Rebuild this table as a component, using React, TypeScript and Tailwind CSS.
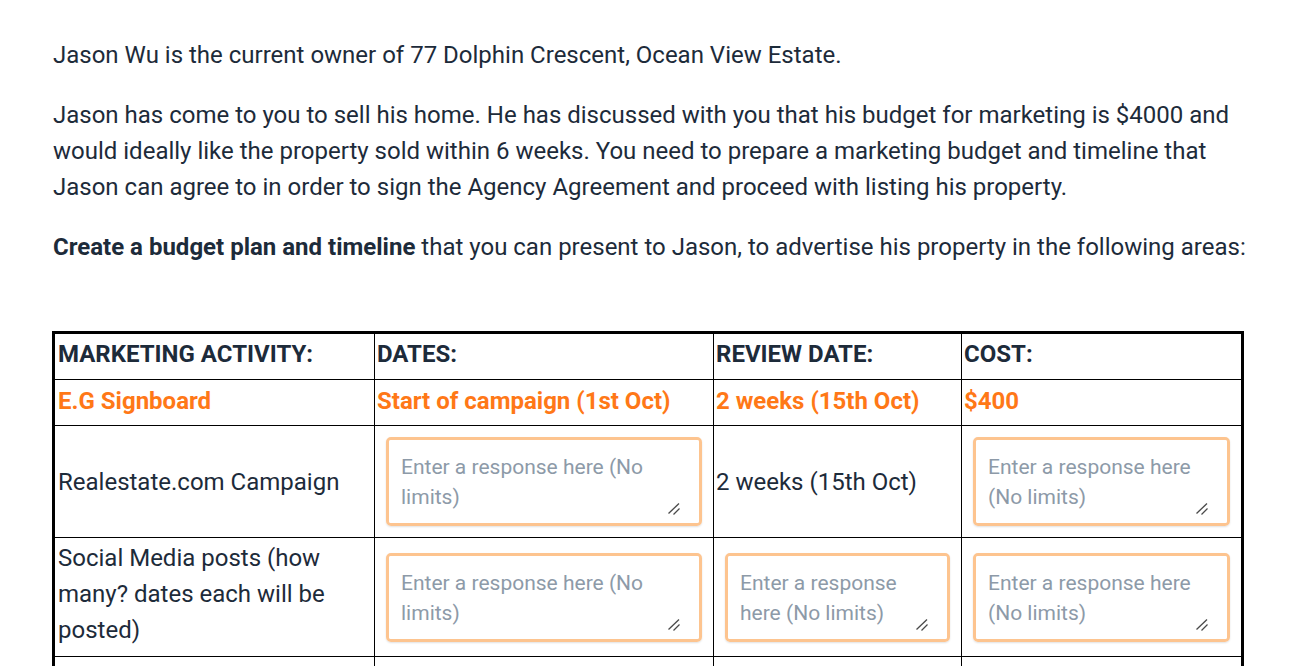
const rows = [
  {
    activity: "Realestate.com Campaign",
    pad: "pt-[5px] pb-[5px]",
    dates: null,
    review: "2 weeks (15th Oct)",
    cost: null,
  },
  {
    activity: "Social Media posts (how many? dates each will be posted)",
    pad: "pt-[2px] pb-[8px]",
    dates: null,
    review: null,
    cost: null,
  },
  {
    activity: "",
    pad: "pt-[5px] pb-[5px]",
    dates: null,
    review: null,
    cost: null,
  },
];

function ResponseBox() {
  return (
    <div className="relative">
      <textarea
        placeholder="Enter a response here (No limits)"
        className="block w-full h-[89px] resize-none rounded-[5px] border-[3px] border-[#fdc48f] bg-white p-3 text-[21px] leading-[30px] text-[#1f2d3d] placeholder:text-[#8d9aa8] shadow-[0_1px_2px_rgba(0,0,0,0.12)] outline-none"
      />
      {/* resize grip */}
      <svg className="absolute right-[22px] bottom-[11px] w-3 h-3" viewBox="0 0 12 12">
        <line x1="0.5" y1="10.5" x2="11" y2="0.5" stroke="#4a4a4a" strokeWidth="1.3" />
        <line x1="5.5" y1="11.5" x2="11.5" y2="5.5" stroke="#4a4a4a" strokeWidth="1.3" />
      </svg>
    </div>
  );
}

function Cell({ value }: { value: string | null }) {
  if (value === null) {
    return (
      <td className="border border-black py-[11px] px-[11px] align-middle">
        <ResponseBox />
      </td>
    );
  }
  return (
    <td className="border border-black pl-[2px] pr-1 pt-[5px] pb-[4px] align-middle">{value}</td>
  );
}

export default function App() {
  return (
    <div className="min-h-screen bg-white font-['Roboto',sans-serif] text-[24px] leading-[36px] text-[#1d2b3a]">
      <div className="pl-[53px] pr-[40px] pt-[37px]">
        <p className="mb-6">Jason Wu is the current owner of 77 Dolphin Crescent, Ocean View Estate.</p>
        <p className="mb-6">
          Jason has come to you to sell his home. He has discussed with you that his budget for marketing is $4000 and
          would ideally like the property sold within 6 weeks. You need to prepare a marketing budget and timeline that
          Jason can agree to in order to sign the Agency Agreement and proceed with listing his property.
        </p>
        <p className="mb-[66px]">
          <strong className="font-bold">Create a budget plan and timeline</strong> that you can present to Jason, to
          advertise his property in the following areas:
        </p>

        <table className="-ml-px w-[1189px] table-fixed border-collapse border-[3px] border-black">
          <colgroup>
            <col className="w-[321px]" />
            <col className="w-[339px]" />
            <col className="w-[248px]" />
            <col className="w-[281px]" />
          </colgroup>
          <thead>
            <tr className="text-left">
              <th className="border border-black pl-[3px] pt-[2px] pb-[7px] font-bold">MARKETING ACTIVITY:</th>
              <th className="border border-black pl-[2px] pt-[2px] pb-[7px] font-bold">DATES:</th>
              <th className="border border-black pl-[2px] pt-[2px] pb-[7px] font-bold">REVIEW DATE:</th>
              <th className="border border-black pl-[2px] pt-[2px] pb-[7px] font-bold">COST:</th>
            </tr>
          </thead>
          <tbody>
            <tr className="font-bold text-[#ff7817]">
              <td className="border border-black pl-[3px] pt-[3px] pb-[6px]">E.G Signboard</td>
              <td className="border border-black pl-[2px] pt-[3px] pb-[6px]">Start of campaign (1st Oct)</td>
              <td className="border border-black pl-[2px] pt-[3px] pb-[6px]">2 weeks (15th Oct)</td>
              <td className="border border-black pl-[2px] pt-[3px] pb-[6px]">$400</td>
            </tr>
            {rows.map((row, i) => (
              <tr key={i}>
                <td className={`border border-black pl-[3px] pr-1 align-middle ${row.pad}`}>{row.activity}</td>
                <Cell value={row.dates} />
                <Cell value={row.review} />
                <Cell value={row.cost} />
              </tr>
            ))}
          </tbody>
        </table>
      </div>
    </div>
  );
}
